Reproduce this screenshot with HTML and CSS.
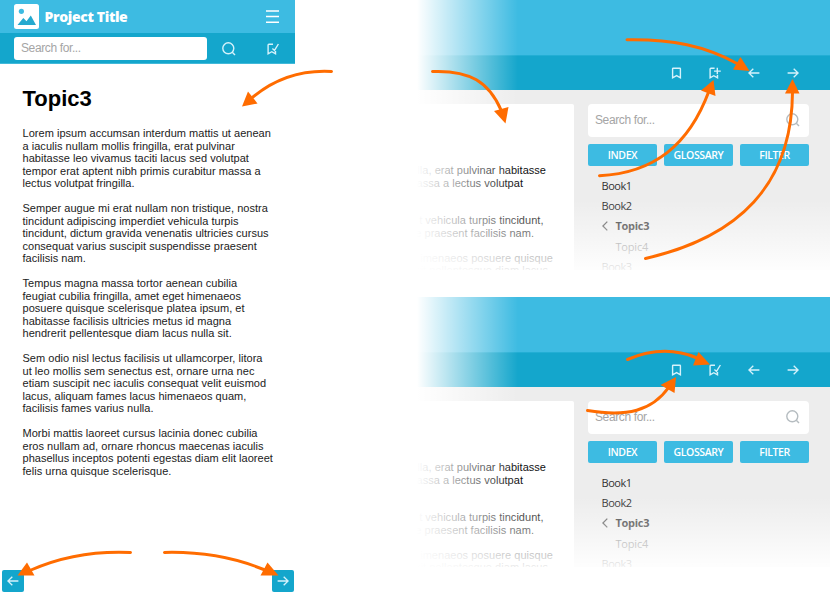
FILE: index.html
```
<!DOCTYPE html>
<html lang="en">
<head>
<meta charset="utf-8">
<title>Project Title</title>
<link rel="stylesheet" href="styles.css">
</head>
<body>
<svg class="defs" width="0" height="0" aria-hidden="true">
  <symbol id="search" viewBox="0 0 14 14"><circle cx="6.3" cy="6.3" r="5.5"/><path d="M10.3 10.3L13 13"/></symbol>
  <symbol id="mark" viewBox="0 0 12 12"><path d="M2.2 1.2h6.600q.6 0 .6.6v9l-3.800-2.200-4 2.200v-9q0-.6.6-.6z"/></symbol>
  <symbol id="add" viewBox="0 0 12 12"><path d="M5.6 1.2H1.900q-.8 0-.8.8v8.800l3.700-2.100 3.700 2.100V8M8.300.8v6.500M5 4.100h6.800"/></symbol>
  <symbol id="check" viewBox="0 0 12 12"><path d="M6 1.2H1.900q-.8 0-.8.8v8.800l3.700-2.100 3.700 2.100V8M5.400 5.400l2.100 2L11.400 1"/></symbol>
  <symbol id="prev" viewBox="0 0 12 12"><path d="M11.400 6H.9M5.300 1.800L.9 6l4.400 4.200"/></symbol>
  <symbol id="next" viewBox="0 0 12 12"><path d="M.6 6h10.500M6.700 1.800L11.100 6l-4.400 4.200"/></symbol>
</svg>
<div class="page">
  <section class="mobile">
    <header class="m-head">
      <svg class="logo" viewBox="0 0 25 25"><rect width="25" height="25" rx="2.5" fill="#fff"/><circle cx="7.4" cy="7.3" r="2.6" fill="#3dbbe2"/><path d="M3.5 21l5.800-7 3.200 3.200 4.300-5.800L22 21z" fill="#25a9cf"/></svg>
      <span class="m-title">Project Title</span>
      <svg class="burger" viewBox="0 0 13 13"><path d="M0 1h13M0 6.600h13M0 12.200h13"/></svg>
    </header>
    <div class="m-bar">
      <div class="m-search">Search for...</div>
      <svg class="ico m-find"><use href="#search"/></svg>
      <svg class="ico m-check"><use href="#check"/></svg>
    </div>
    <article class="m-article">
      <h1>Topic3</h1>
      <p>Lorem ipsum accumsan interdum mattis ut aenean<br>a iaculis nullam mollis fringilla, erat pulvinar<br>habitasse leo vivamus taciti lacus sed volutpat<br>tempor erat aptent nibh primis curabitur massa a<br>lectus volutpat fringilla.</p>
      <p>Semper augue mi erat nullam non tristique, nostra<br>tincidunt adipiscing imperdiet vehicula turpis<br>tincidunt, dictum gravida venenatis ultricies cursus<br>consequat varius suscipit suspendisse praesent<br>facilisis nam.</p>
      <p>Tempus magna massa tortor aenean cubilia<br>feugiat cubilia fringilla, amet eget himenaeos<br>posuere quisque scelerisque platea ipsum, et<br>habitasse facilisis ultricies metus id magna<br>hendrerit pellentesque diam lacus nulla sit.</p>
      <p>Sem odio nisl lectus facilisis ut ullamcorper, litora<br>ut leo mollis sem senectus est, ornare urna nec<br>etiam suscipit nec iaculis consequat velit euismod<br>lacus, aliquam fames lacus himenaeos quam,<br>facilisis fames varius nulla.</p>
      <p>Morbi mattis laoreet cursus lacinia donec cubilia<br>eros nullam ad, ornare rhoncus maecenas iaculis<br>phasellus inceptos potenti egestas diam elit laoreet<br>felis urna quisque scelerisque.</p>
    </article>
    <nav class="m-nav">
      <span class="m-btn"><svg class="ico"><use href="#prev"/></svg></span>
      <span class="m-btn"><svg class="ico"><use href="#next"/></svg></span>
    </nav>
  </section>

  <div class="desktops">
    <section class="desk">
      <div class="d-head"></div>
      <div class="d-bar">
        <svg class="ico"><use href="#mark"/></svg>
        <svg class="ico"><use href="#add"/></svg>
        <svg class="ico"><use href="#prev"/></svg>
        <svg class="ico"><use href="#next"/></svg>
      </div>
      <div class="d-body">
        <div class="d-card">
          <div class="line l1">lla, erat pulvinar habitasse</div>
          <div class="line l2">assa a lectus volutpat</div>
          <div class="line l3">t vehicula turpis tincidunt,</div>
          <div class="line l4">e praesent facilisis nam.</div>
          <div class="line l5">imenaeos posuere quisque</div>
          <div class="line l6">rit pellentesque diam lacus</div>
        </div>
        <aside class="side">
          <div class="d-search"><span>Search for...</span><svg class="ico"><use href="#search"/></svg></div>
          <div class="tabs"><span>INDEX</span><span>GLOSSARY</span><span>FILTER</span></div>
          <ul class="tree">
            <li>Book1</li><li>Book2</li>
            <li class="cur"><svg class="chev" viewBox="0 0 6 10"><path d="M5.300.6L.9 5l4.400 4.400"/></svg>Topic3</li>
            <li class="sub">Topic4</li><li>Book3</li>
          </ul>
        </aside>
      </div>
    </section>
    <section class="desk">
      <div class="d-head"></div>
      <div class="d-bar">
        <svg class="ico"><use href="#mark"/></svg>
        <svg class="ico"><use href="#check"/></svg>
        <svg class="ico"><use href="#prev"/></svg>
        <svg class="ico"><use href="#next"/></svg>
      </div>
      <div class="d-body">
        <div class="d-card">
          <div class="line l1">lla, erat pulvinar habitasse</div>
          <div class="line l2">assa a lectus volutpat</div>
          <div class="line l3">t vehicula turpis tincidunt,</div>
          <div class="line l4">e praesent facilisis nam.</div>
          <div class="line l5">imenaeos posuere quisque</div>
          <div class="line l6">rit pellentesque diam lacus</div>
        </div>
        <aside class="side">
          <div class="d-search"><span>Search for...</span><svg class="ico"><use href="#search"/></svg></div>
          <div class="tabs"><span>INDEX</span><span>GLOSSARY</span><span>FILTER</span></div>
          <ul class="tree">
            <li>Book1</li><li>Book2</li>
            <li class="cur"><svg class="chev" viewBox="0 0 6 10"><path d="M5.300.6L.9 5l4.400 4.400"/></svg>Topic3</li>
            <li class="sub">Topic4</li><li>Book3</li>
          </ul>
        </aside>
      </div>
    </section>
  </div>

  <svg class="arrows" viewBox="0 0 830 595">
    <g class="shaft">
      <path d="M331.500 71.500Q287 69 253 97"/>
      <path d="M432.500 71.500C470 70 489 82 501.500 111"/>
      <path d="M627 39.800C672 39 705 46 737 63.500"/>
      <path d="M599.500 175.700C654 173 689 145 709 91"/>
      <path d="M645.500 258.500C739 237 792 185 792.500 92"/>
      <path d="M130.500 552.400Q76 550 31 570"/>
      <path d="M164.500 552.400Q219 551 265 570"/>
      <path d="M627.500 359.500Q664 344 697 358"/>
      <path d="M587.500 410.500C627 417 652 411 669 387"/>
    </g>
    <g class="tips">
      <path d="M242 106.500L248 91.500L257.500 103.500z"/>
      <path d="M505.500 123.500L494 111L508.500 107z"/>
      <path d="M749.500 71L733 69.500L740.500 57z"/>
      <path d="M713.500 80L715.500 96L701 90.500z"/>
      <path d="M792.500 79L799.500 93.500L785 93.500z"/>
      <path d="M17.500 575.500L27 562.500L34.500 575.500z"/>
      <path d="M278.500 575.500L267.500 562.500L260.500 575.500z"/>
      <path d="M710 364.500L698.500 352L693 365.500z"/>
      <path d="M676 377L674.500 393L660.500 385z"/>
    </g>
  </svg>
</div>
</body>
</html>
```

FILE: styles.css
```
* { box-sizing: border-box; }
body { margin: 0; background: #fff; font-family: "Liberation Sans", Arial, sans-serif; }
.defs { position: absolute; }
.page { position: relative; display: flex; justify-content: space-between; width: 830px; height: 595px; overflow: hidden; }
.ico { display: block; width: 12px; height: 12px; fill: none; stroke: #d5f2fb; stroke-width: 1.4; flex: none; }

.mobile { width: 295px; height: 595px; display: flex; flex-direction: column; }
.m-head { height: 33px; flex: none; background: #3dbbe2; display: flex; align-items: center; padding: 0 15px 0 14px; }
.logo { width: 25px; height: 25px; margin-top: -1px; }
.m-title { flex: 1; margin-left: 5.500px; color: #fff; font: 800 14px/18px "Open Sans", sans-serif; letter-spacing: -.36px; white-space: nowrap; }
.burger { width: 13px; height: 13px; stroke: #fff; stroke-width: 1.5; margin-right: 1px; }
.m-bar { height: 31px; flex: none; background: #14a6cc; border-bottom: 1px solid #41b9d9; display: flex; align-items: center; padding-left: 14px; }
.m-search { width: 193px; height: 23px; background: #fff; border-radius: 3px; padding-left: 7px; font-size: 12px; line-height: 22px; letter-spacing: -.38px; color: #a5a5a5; }
.m-find { width: 14px; height: 14px; margin: 1px 0 0 15px; }
.m-check { margin: 1px 0 0 31px; }
.m-article { flex: 1; padding: 21px 0 0 22.500px; color: #222; }
h1 { margin: 0; font-size: 22px; line-height: 28px; color: #000; }
p { margin: 0 0 12.500px; font-size: 11px; line-height: 12.500px; letter-spacing: .03px; white-space: nowrap; }
h1 + p { margin-top: 14px; }
.m-nav { height: 26px; flex: none; display: flex; justify-content: space-between; padding: 0 1px 0 2px; }
.m-btn { width: 22px; height: 22px; margin-top: 1px; background: #14a6cc; border-radius: 2px; display: flex; align-items: center; justify-content: center; }

.desktops { width: 414px; display: flex; flex-direction: column; gap: 27px; }
.desk { position: relative; height: 270px; overflow: hidden; }
.desk::before, .desk::after { content: ""; position: absolute; z-index: 1; left: 0; top: 0; bottom: 0; }
.desk::before { width: 102px; background: linear-gradient(90deg, #fff 1px, transparent); }
.desk::after { right: 0; top: 200px; background: linear-gradient(transparent, rgba(255,255,255,.3) 35%, rgba(255,255,255,.92)); }
.d-head { height: 55px; background: #3dbbe2; }
.d-bar { height: 35px; background: #14a6cc; border-top: 1px solid #22aed4; display: flex; align-items: center; justify-content: flex-end; gap: 26.600px; padding: 0 31.400px 1px 0; }
.d-body { height: 180px; background: #ededed; display: flex; gap: 14px; padding-top: 14px; }
.d-card { width: 158px; background: #fff; border-top-right-radius: 2px; padding-top: 60px; color: #111; overflow: hidden; }
.line { display: flex; justify-content: flex-end; font-size: 11px; line-height: 12.500px; letter-spacing: .03px; white-space: nowrap; }
.l1 { padding-right: 28px; }
.l2 { padding-right: 51px; }
.l3 { padding-right: 30.500px; margin-top: 25px; }
.l4 { padding-right: 40px; }
.l5 { padding-right: 21px; margin-top: 12.500px; }
.l6 { padding-right: 26px; }
.side { width: 221px; }
.d-search { height: 33px; background: #fff; border-radius: 4px; display: flex; align-items: center; justify-content: space-between; padding: 0 9px 1px 7px; font-size: 12px; letter-spacing: -.38px; color: #a5a5a5; }
.d-search .ico { width: 14px; height: 14px; stroke: #b5bcc0; }
.tabs { display: grid; grid-template-columns: repeat(3, 69px); gap: 7px; margin-top: 7px; }
.tabs span { height: 22px; background: #3dbbe2; border-radius: 2px; color: #fff; text-align: center; font: 600 10.500px/22px "Open Sans", sans-serif; letter-spacing: -.4px; }
.tree { list-style: none; margin: 10px 0 0; padding: 0 0 0 13.500px; font: 11px/20.200px "Open Sans", sans-serif; letter-spacing: -.45px; color: #333; }
.tree li { height: 20.200px; display: flex; align-items: center; }
.tree .cur { font-weight: 700; letter-spacing: -.3px; }
.tree .sub { padding-left: 14px; color: #777; letter-spacing: -.2px; }
.chev { width: 6px; height: 10px; margin-right: 8px; fill: none; stroke: #555; stroke-width: 1.3; }

.arrows { position: absolute; inset: 0; z-index: 2; width: 830px; height: 595px; }
.shaft { fill: none; stroke: #ff6c00; stroke-width: 3; stroke-linecap: round; }
.tips { fill: #ff6c00; }
```
